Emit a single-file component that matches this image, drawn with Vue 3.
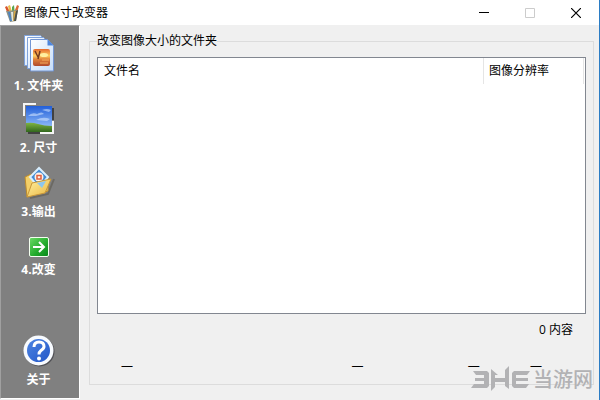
<script setup>
const columns = ['文件名', '图像分辨率']
const count = 0
const stats = ['—', '—', '—', '—']
</script>

<template>
  <div class="window">
    <header class="titlebar">
      <svg class="app-icon" width="16" height="18" viewBox="0 0 16 18" aria-hidden="true">
        <path d="M1 3l2-1 5 10-3 1z" fill="#d8542c" />
        <path d="M4 2l2-1 3 10H6z" fill="#e8bd4a" />
        <path d="M8 3l2-2 1 10H8z" fill="#5aa64f" />
        <path d="M13 1l2 1-3 10-3-1z" fill="#db6a36" />
        <path d="M2 7l12-1-2 11-6 1z" fill="#8f9488" />
        <path d="M4 8l2 0 2 9H6z" fill="#4d83c0" />
        <path d="M7 8h2l0 9H8z" fill="#e6e8dc" />
        <path d="M10 7h2l-2 10H9z" fill="#d4a646" />
        <path d="M12 7l2-1-2 11h-2z" fill="#4d5048" />
      </svg>
      <h1 class="title">图像尺寸改变器</h1>
      <div class="controls">
        <button type="button" class="control" aria-label="最小化">
          <svg width="10" height="10" viewBox="0 0 10 10"><path d="M0 4.500h10" stroke="#000" /></svg>
        </button>
        <button type="button" class="control" aria-label="最大化" disabled>
          <svg width="10" height="10" viewBox="0 0 10 10"><path d="M.5.5h9v9h-9z" fill="none" stroke="#ccc" /></svg>
        </button>
        <button type="button" class="control" aria-label="关闭">
          <svg width="10" height="10" viewBox="0 0 10 10"><path d="M0 0l10 10M10 0L0 10" stroke="#000" stroke-width="1.2" /></svg>
        </button>
      </div>
    </header>

    <div class="body">
      <nav class="sidebar">
        <button type="button" class="step">
          <svg width="32" height="38" viewBox="0 0 32 38" aria-hidden="true">
            <defs>
              <linearGradient id="sheet" x1="0" y1="0" x2="1" y2="1">
                <stop offset="0" stop-color="#fff" /><stop offset="1" stop-color="#c4dcf9" />
              </linearGradient>
              <linearGradient id="sunset" x1="0" y1="0" x2="0" y2="1">
                <stop offset="0" stop-color="#e5682c" /><stop offset=".4" stop-color="#ffcf62" /><stop offset=".6" stop-color="#e0823a" /><stop offset="1" stop-color="#b04a2c" />
              </linearGradient>
            </defs>
            <path d="M1.500.5h16l4 4v26h-20z" fill="url(#sheet)" stroke="#7fa2da" />
            <path d="M4.500 2.500h16l4 4v27h-20z" fill="url(#sheet)" stroke="#7fa2da" />
            <path d="M7.500 4.500h17l6 6v25.500h-23z" fill="url(#sheet)" stroke="#7396d4" />
            <path d="M24.500 4.500l6 6h-6z" fill="#4d86dd" />
            <rect x="10" y="14" width="17" height="17" rx="2" fill="url(#sunset)" />
            <ellipse cx="21" cy="20" rx="4" ry="2" fill="#fff0a0" />
            <path d="M12 16l3 6M17 16l-2 8" fill="none" stroke="#743720" stroke-width="1.5" />
            <path d="M19 25h7M17 28h8" stroke="#f4ab5c" />
          </svg>
          <span>1. 文件夹</span>
        </button>
        <button type="button" class="step">
          <svg width="32" height="32" viewBox="0 0 32 32" aria-hidden="true">
            <defs>
              <linearGradient id="sky" x1="0" y1="0" x2="0" y2="1">
                <stop offset="0" stop-color="#225fd9" /><stop offset="1" stop-color="#a9d0ff" />
              </linearGradient>
              <linearGradient id="grass" x1="0" y1="0" x2="0" y2="1">
                <stop offset="0" stop-color="#80b543" /><stop offset="1" stop-color="#31671d" />
              </linearGradient>
            </defs>
            <path d="M1 13V1h12" fill="none" stroke="#f5f5f5" stroke-width="2" />
            <path d="M30 5v12M5 30h12" stroke="#414141" stroke-width="2" />
            <path d="M30 18v12H17" fill="none" stroke="#f5f5f5" stroke-width="2" />
            <rect x="3" y="3" width="26" height="26" fill="url(#sky)" />
            <path d="M5 13q4-4 9-2 5-3 7 0l-8 2zM19 7q5-2 9 0l-2 2zM13 17q7-4 14-1l-3 2z" fill="#d9e9ff" opacity=".55" />
            <path d="M3 20q6-1 12 1t14 2v6H3z" fill="url(#grass)" />
          </svg>
          <span>2. 尺寸</span>
        </button>
        <button type="button" class="step">
          <svg width="32" height="34" viewBox="0 0 32 34" aria-hidden="true">
            <defs>
              <linearGradient id="folder" x1="0" y1="0" x2="1" y2="1">
                <stop offset="0" stop-color="#fff2a2" /><stop offset="1" stop-color="#eab540" />
              </linearGradient>
            </defs>
            <path d="M7 33l18-4 6-15" fill="none" stroke="#5d5a50" stroke-width="2" opacity=".6" />
            <path d="M2 12l6-3 3 3 14 1v13L4 32z" fill="#f3cf68" stroke="#bd8c2c" />
            <path d="M16 3l9 9-9 11-9-11z" fill="#438bd3" stroke="#d9efff" stroke-width="2" />
            <circle cx="16" cy="12" r="4.500" fill="#fff2e9" />
            <path d="M14 14v-3.500h4V14z" fill="none" stroke="#df6040" stroke-width="1.500" />
            <path d="M9 18l19-4-6 14-18 4z" fill="url(#folder)" stroke="#c8973a" />
            <path d="M14 18l9-2-4 7z" fill="#8cc6ef" />
          </svg>
          <span>3.输出</span>
        </button>
        <button type="button" class="step">
          <svg width="20" height="28" viewBox="0 0 20 28" aria-hidden="true">
            <defs>
              <linearGradient id="go" x1="0" y1="0" x2="1" y2="1">
                <stop offset="0" stop-color="#6ddb67" /><stop offset=".6" stop-color="#20a92a" /><stop offset="1" stop-color="#08871a" />
              </linearGradient>
            </defs>
            <rect x=".5" y="8.500" width="19" height="19" rx="1.500" fill="url(#go)" stroke="#f4fff0" />
            <path d="M4 18h11M10 13l5 5-5 5" fill="none" stroke="#fff" stroke-width="2" />
          </svg>
          <span>4.改变</span>
        </button>
        <button type="button" class="step about">
          <svg width="32" height="32" viewBox="0 0 32 32" aria-hidden="true">
            <defs>
              <linearGradient id="help" x1="0" y1="0" x2="1" y2="1">
                <stop offset="0" stop-color="#4c84e2" /><stop offset="1" stop-color="#2457c8" />
              </linearGradient>
            </defs>
            <circle cx="16.500" cy="16.500" r="15" fill="#4f4f54" />
            <circle cx="15.500" cy="15.500" r="15" fill="#f8fbff" />
            <circle cx="15.500" cy="15.500" r="11.500" fill="url(#help)" />
            <path d="M11 12q0-5 5-5t5 4.500q0 2-3 4-2 1.500-2 4" fill="none" stroke="#fff" stroke-width="3" />
            <circle cx="16" cy="23.500" r="2" fill="#fff" />
          </svg>
          <span>关于</span>
        </button>
      </nav>

      <main class="content">
        <fieldset class="group">
          <legend>改变图像大小的文件夹</legend>
          <div class="list">
            <table>
              <thead>
                <tr><th v-for="name in columns" :key="name" scope="col">{{ name }}</th></tr>
              </thead>
            </table>
          </div>
          <p class="count">{{ count }} 内容</p>
          <div class="stats">
            <span v-for="(value, i) in stats" :key="i">{{ value }}</span>
          </div>
        </fieldset>
      </main>
    </div>

    <div class="watermark">
      <svg width="60" height="28" viewBox="0 0 60 28" aria-hidden="true">
        <g fill="#b2b2b4">
          <path d="M3 7h14l2 2v13l-2 2H1l3-4h10v-3H5v-3h9v-3H6z" />
          <path d="M21 5l7 6h-3v3h10V6l4-4v23l-4-3v-4H25v5l-4 4z" />
          <path d="M44 7h16l-3 4H46v3h12v3H46v3h13l-3 4H44l-2-2V9z" />
        </g>
      </svg>
      <span>当游网</span>
    </div>
  </div>
</template>

<style>
body {
  margin: 0;
}
</style>

<style scoped>
.window {
  position: relative;
  box-sizing: border-box;
  display: flex;
  flex-direction: column;
  min-height: 100vh;
  border-right: 1px solid #2b7cc4;
  background: #f0f0f0;
  color: #000;
  font: 12px/16px "Open Sans", "Noto Sans CJK SC", sans-serif;
}

.titlebar {
  display: flex;
  align-items: center;
  height: 25px;
  padding-left: 4px;
  background: #fff;
}

.title {
  flex: 1;
  margin: 0 0 0 4px;
  font-size: 12px;
  font-weight: 400;
}

.controls {
  display: flex;
  align-self: stretch;
}

.control {
  display: grid;
  place-items: center;
  width: 46px;
  padding: 0;
  border: 0;
  background: none;
}

.body {
  flex: 1;
  display: flex;
  padding-bottom: 1px;
}

.sidebar {
  box-sizing: border-box;
  display: flex;
  flex-direction: column;
  gap: 9px;
  width: 80px;
  padding: 9px 3px 10px 0;
  border: 1px solid #fff;
  border-top-color: #a0a0a0;
  border-left-color: #a0a0a0;
  background: #808080;
}

.step {
  display: flex;
  flex-direction: column;
  align-items: center;
  gap: 5px;
  padding: 0;
  border: 0;
  background: none;
  color: #fff;
  font: inherit;
  font-weight: 700;
  white-space: nowrap;
}

.step svg {
  display: block;
}

.about {
  margin-top: auto;
}

.content {
  flex: 1;
  display: flex;
  padding: 8px 5px 14px 9px;
}

.group {
  flex: 1;
  display: flex;
  flex-direction: column;
  min-width: 0;
  margin: 0;
  padding: 8px 7px 10px;
  border: 1px solid #dcdcdc;
}

.group legend {
  height: 16px;
  padding: 0;
}

.list {
  flex: 1;
  padding-right: 1px;
  border: 1px solid #828790;
  background: #fff;
}

table {
  width: 100%;
  border-spacing: 0;
  table-layout: fixed;
}

th {
  height: 26px;
  padding: 0 6px;
  border-right: 1px solid #e5e5e5;
  font-weight: 400;
  text-align: left;
}

th:last-child {
  width: 88px;
  padding-left: 5px;
}

.count {
  margin: 8px 13px 20px 0;
  text-align: right;
}

.stats {
  display: grid;
  grid-template-columns: 230fr 116fr 62fr 56fr;
  padding-left: 24px;
}

.watermark {
  position: absolute;
  right: 6px;
  bottom: 8px;
  display: flex;
  align-items: flex-end;
  gap: 3px;
  color: #b2b2b4;
  font-size: 20px;
  font-weight: 500;
  line-height: 24px;
}
</style>
